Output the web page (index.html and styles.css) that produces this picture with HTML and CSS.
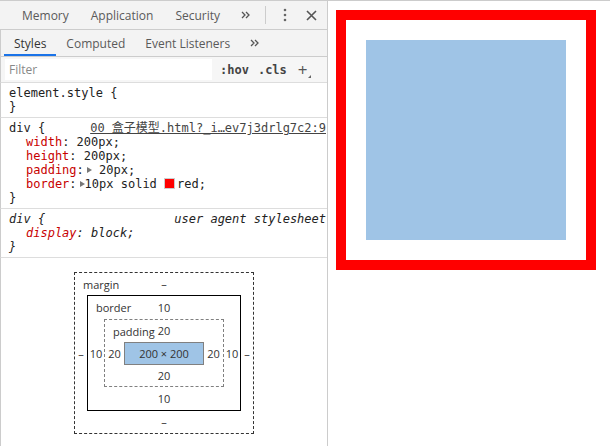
FILE: index.html
```html
<!DOCTYPE html>
<html>
<head>
    <title>盒子模型</title>
    <link rel="stylesheet" href="styles.css">
</head>
<body>

<div class="page">
    <div class="devtools">
        <div class="main-tabs">
            <span class="tab">Memory</span>
            <span class="tab">Application</span>
            <span class="tab">Security</span>
            <span class="more">
                <svg width="9" height="8" viewBox="0 0 9 8"><path d="M1 1l3 3-3 3M5 1l3 3-3 3" fill="none" stroke="#555" stroke-width="1.3"/></svg>
            </span>
            <span class="controls">
                <span class="sep"></span>
                <svg class="kebab" width="4" height="14" viewBox="0 0 4 14"><circle cx="2" cy="2" r="1.3" fill="#666"/><circle cx="2" cy="7" r="1.3" fill="#666"/><circle cx="2" cy="12" r="1.3" fill="#666"/></svg>
                <svg class="close" width="11" height="11" viewBox="0 0 11 11"><path d="M1 1l9 9M10 1l-9 9" stroke="#555" stroke-width="1.6"/></svg>
            </span>
        </div>

        <div class="side-tabs">
            <span class="tab selected">Styles</span>
            <span class="tab">Computed</span>
            <span class="tab">Event Listeners</span>
            <span class="more">
                <svg width="9" height="8" viewBox="0 0 9 8"><path d="M1 1l3 3-3 3M5 1l3 3-3 3" fill="none" stroke="#555" stroke-width="1.3"/></svg>
            </span>
        </div>

        <div class="filter-bar">
            <div class="filter">Filter</div>
            <span class="toggle">:hov</span>
            <span class="toggle">.cls</span>
            <span class="plus">+</span>
        </div>

        <div class="rule">
            <div>element.style {</div>
            <div>}</div>
        </div>

        <div class="rule">
            <div class="rule-head">
                <span>div {</span>
                <span class="source">00 盒子模型.html?_i…ev7j3drlg7c2:9</span>
            </div>
            <div class="prop"><span class="name">width</span>: 200px;</div>
            <div class="prop"><span class="name">height</span>: 200px;</div>
            <div class="prop"><span class="name">padding</span>:<span class="arrow"></span> 20px;</div>
            <div class="prop"><span class="name">border</span>:<span class="arrow"></span>10px solid <span class="swatch"></span>red;</div>
            <div>}</div>
        </div>

        <div class="rule ua">
            <div class="rule-head">
                <span>div {</span>
                <span>user agent stylesheet</span>
            </div>
            <div class="prop"><span class="name">display</span>: block;</div>
            <div>}</div>
        </div>

        <div class="metrics">
            <div class="bm bm-margin">
                <span class="bm-label">margin</span>
                <div class="bm-top">–</div>
                <div class="bm-row">
                    <div class="bm-side">–</div>
                    <div class="bm bm-border">
                        <span class="bm-label">border</span>
                        <div class="bm-top">10</div>
                        <div class="bm-row">
                            <div class="bm-side">10</div>
                            <div class="bm bm-padding">
                                <span class="bm-label">padding</span>
                                <div class="bm-top">20</div>
                                <div class="bm-row">
                                    <div class="bm-side">20</div>
                                    <div class="bm-content">200 × 200</div>
                                    <div class="bm-side">20</div>
                                </div>
                                <div class="bm-bottom">20</div>
                            </div>
                            <div class="bm-side">10</div>
                        </div>
                        <div class="bm-bottom">10</div>
                    </div>
                    <div class="bm-side">–</div>
                </div>
                <div class="bm-bottom">–</div>
            </div>
        </div>
    </div>

    <div class="viewport">
        <div class="demo"></div>
    </div>
</div>

</body>
</html>
```

FILE: styles.css
```css
body {
    margin: 0;
    font-family: "Open Sans", "Noto Sans CJK SC", sans-serif;
    font-size: 12px;
    color: #333;
}

.page {
    display: flex;
    height: 445px;
    border-top: 1px solid #ccc;
    overflow: hidden;
}

.devtools {
    width: 327px;
    flex-shrink: 0;
    border-right: 1px solid #ccc;
    display: flex;
    flex-direction: column;
}

.devtools > div {
    flex-shrink: 0;
}

.main-tabs, .side-tabs {
    display: flex;
    align-items: center;
    background-color: #f3f3f3;
    border-bottom: 1px solid #ccc;
    color: #5a5a5a;
}

.main-tabs {
    height: 28px;
    padding-left: 11px;
}

.main-tabs .tab {
    padding: 0 11px;
}

.more {
    display: flex;
    padding: 0 10px;
}

.controls {
    margin-left: auto;
    display: flex;
    align-items: center;
    padding-right: 10px;
}

.sep {
    width: 1px;
    height: 18px;
    background-color: #ccc;
    margin-right: 17px;
}

.kebab {
    margin-right: 19px;
}

.side-tabs {
    height: 26px;
    padding-left: 3px;
    border-left: 1px solid #ccc;
}

.side-tabs .tab {
    height: 100%;
    display: flex;
    align-items: center;
    padding: 0 10px;
    box-sizing: border-box;
}

.side-tabs .selected {
    color: #333;
    border-bottom: 2px solid #1a73e8;
    padding-top: 2px;
}

.filter-bar {
    display: flex;
    align-items: center;
    height: 25px;
    padding-left: 4px;
    background-color: #f6f6f6;
    border-bottom: 1px solid #ddd;
    border-left: 1px solid #ccc;
}

.filter {
    width: 203px;
    height: 21px;
    line-height: 21px;
    padding-left: 4px;
    background-color: #fff;
    color: #888;
    margin-right: 8px;
}

.toggle {
    font: bold 12px "DejaVu Sans Mono", monospace;
    color: #444;
    margin-right: 9px;
}

.plus {
    font-size: 17px;
    line-height: 17px;
    color: #555;
    margin-left: 2px;
    position: relative;
}

.plus::after {
    content: "";
    position: absolute;
    right: -3px;
    bottom: 0;
    border-left: 3px solid transparent;
    border-bottom: 3px solid #666;
}

.rule {
    font: 12px/14px "DejaVu Sans Mono", "Noto Sans CJK SC", monospace;
    color: #222;
    padding: 3px 1px 3px 8px;
    border-bottom: 1px solid #ddd;
    border-left: 1px solid #ccc;
    white-space: nowrap;
}

.rule-head {
    display: flex;
    justify-content: space-between;
}

.source {
    color: #444;
    text-decoration: underline;
}

.prop {
    padding-left: 17px;
}

.name {
    color: #c80000;
}

.arrow {
    display: inline-block;
    margin-left: 3px;
    border-top: 3px solid transparent;
    border-bottom: 3px solid transparent;
    border-left: 5px solid #777;
    vertical-align: 1px;
}

.swatch {
    display: inline-block;
    width: 9px;
    height: 9px;
    background-color: red;
    border: 1px solid #ccc;
    margin-right: 2px;
    vertical-align: -1px;
}

.ua {
    font-style: italic;
}

.metrics {
    flex: 1;
    display: flex;
    justify-content: center;
    align-items: flex-start;
    padding-top: 14px;
    border-left: 1px solid #ccc;
    font-size: 11px;
}

.bm {
    position: relative;
    display: flex;
    flex-direction: column;
    color: #333;
}

.bm-margin {
    border: 1px dashed #333;
}

.bm-border {
    border: 1px solid #000;
}

.bm-padding {
    border: 1px dashed #808080;
}

.bm-label {
    position: absolute;
    left: 8px;
    top: 4px;
}

.bm-top, .bm-bottom {
    height: 22px;
    line-height: 22px;
    text-align: center;
}

.bm-border > .bm-top, .bm-border > .bm-bottom {
    height: 23px;
    line-height: 23px;
}

.bm-padding > .bm-bottom {
    height: 21px;
    line-height: 21px;
}

.bm-row {
    display: flex;
    align-items: center;
}

.bm-side {
    width: 12px;
    text-align: center;
}

.bm-border > .bm-row > .bm-side {
    width: 16px;
}

.bm-padding > .bm-row > .bm-side {
    width: 19px;
}

.bm-content {
    width: 78px;
    height: 21px;
    line-height: 21px;
    text-align: center;
    background-color: #9fc4e6;
    border: 1px solid #808080;
}

.viewport {
    flex: 1;
    padding: 9px 0 0 8px;
}

.demo {
    width: 200px;
    height: 200px;
    padding: 20px;
    border: 10px solid red;
    background-color: #9fc4e6;
    background-clip: content-box;
}
```
